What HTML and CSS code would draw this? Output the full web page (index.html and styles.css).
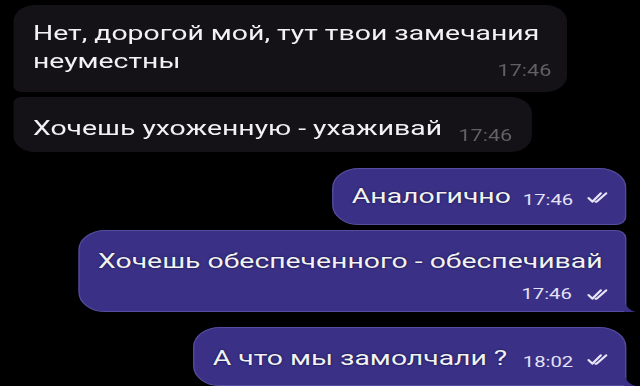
FILE: index.html
```html
<!DOCTYPE html>
<html lang="ru">
<head>
<meta charset="utf-8">
<title>Чат</title>
<link rel="stylesheet" href="styles.css">
</head>
<body>
<div class="chat">
  <div class="msg in m1">
    <div class="line">Нет, дорогой мой, тут твои замечания</div>
    <div class="row"><span class="line">неуместны</span><span class="time">17:46</span></div>
  </div>
  <div class="msg in m2">
    <span class="line">Хочешь ухоженную - ухаживай</span><span class="time">17:46</span>
  </div>
  <div class="msg out m3">
    <span class="line">Аналогично</span><span class="time">17:46</span>
    <svg class="check" viewBox="0 0 20 10" preserveAspectRatio="none"><path d="M1 5.5 L3.8 8.8 L10 1.2 M6.2 8.8 L7 8.8 L14 1.2"/></svg>
  </div>
  <div class="msg out m4 tail">
    <div class="line">Хочешь обеспеченного - обеспечивай</div>
    <div class="row end"><span class="time">17:46</span>
      <svg class="check" viewBox="0 0 20 10" preserveAspectRatio="none"><path d="M1 5.5 L3.8 8.8 L10 1.2 M6.2 8.8 L7 8.8 L14 1.2"/></svg></div>
  </div>
  <div class="msg out m5 tail">
    <span class="line">А что мы замолчали ?</span><span class="time">18:02</span>
    <svg class="check" viewBox="0 0 20 10" preserveAspectRatio="none"><path d="M1 5.5 L3.8 8.8 L10 1.2 M6.2 8.8 L7 8.8 L14 1.2"/></svg>
  </div>
</div>
</body>
</html>
```
FILE: styles.css
```css
html, body {
  margin: 0;
  padding: 0;
  background: #000;
  height: 100%;
  overflow: hidden;
}
/* the screenshot is horizontally stretched; lay out narrow and stretch */
.chat {
  box-sizing: border-box;
  width: 474px;
  display: flex;
  flex-direction: column;
  padding: 5px 10.4px 0 10.4px;
  font-family: Roboto, "Noto Sans", sans-serif;
  color: #f2f2f4;
  transform: scaleX(1.35);
  transform-origin: 0 0;
}
.msg {
  box-sizing: border-box;
  position: relative;
}
.line {
  font-size: 21px;
  line-height: 28px;
  white-space: nowrap;
}
.time {
  font-size: 15px;
}
.in {
  align-self: flex-start;
  background: #141217;
  border-radius: 16px;
}
.in .time { color: #625f67; font-size: 16px; }
.out {
  align-self: flex-end;
  background: #3a3187;
  border: 1px solid #554d9d;
  border-radius: 20px;
}
.out .line { text-shadow: 0 0 2px #0c0a30; }
.out .time { color: #e4e2f4; }
.check {
  width: 20px;
  height: 11px;
  fill: none;
  stroke: #e8e6f6;
  stroke-width: 1.8;
  stroke-linecap: round;
  stroke-linejoin: round;
  overflow: visible;
}
.row {
  display: flex;
  align-items: baseline;
  justify-content: space-between;
}
.row.end {
  justify-content: flex-end;
  align-items: flex-end;
  gap: 11px;
}
.m1 {
  width: 410px;
  height: 87px;
  padding: 14px 12px 0 14px;
  border-bottom-left-radius: 6px;
}
.m1 .time { position: relative; top: 8px; }
.m2 {
  margin-top: 5px;
  width: 384px;
  height: 55px;
  padding: 17px 15px 0 14px;
  display: flex;
  align-items: baseline;
  gap: 8px;
  border-top-left-radius: 6px;
}
.m2 .time { position: relative; top: 6px; margin-left: auto; }
.m3 {
  margin-top: 16px;
  width: 218px;
  height: 57px;
  padding: 13px 8px 0 14px;
  display: flex;
  align-items: baseline;
  border-bottom-right-radius: 8px;
}
.m3 .time, .m5 .time { margin-left: auto; position: relative; top: 2px; }
.m3 .check, .m5 .check { margin-left: 10px; }
.m4 {
  margin-top: 5px;
  width: 406px;
  height: 82px;
  padding: 16px 8px 0 14px;
  border-top-right-radius: 8px;
  border-bottom-right-radius: 0;
}
.m4 .row.end { margin-top: 10px; }
.m4 .check { margin-bottom: 3px; }
.m5 {
  margin-top: 15px;
  width: 321px;
  height: 59px;
  padding: 16px 8px 0 14px;
  display: flex;
  align-items: baseline;
  border-bottom-right-radius: 0;
}
.tail::after {
  content: "";
  position: absolute;
  right: -9px;
  bottom: -1px;
  width: 10px;
  height: 16px;
  background: #3a3187;
  clip-path: path("M0 0 C 1 9, 4 15, 10 16 L 0 16 Z");
}
```
